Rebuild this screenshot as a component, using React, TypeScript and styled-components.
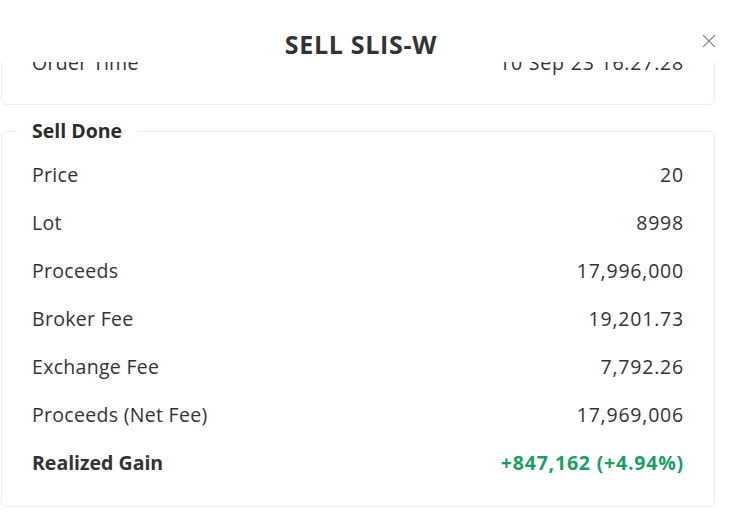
import React, { useLayoutEffect, useRef } from "react";
import styled, { createGlobalStyle } from "styled-components";

const GlobalStyle = createGlobalStyle`
  html, body {
    margin: 0;
    padding: 0;
    background: #ffffff;
  }
  body {
    font-family: "Open Sans", Lato, sans-serif;
    color: #333333;
  }
`;

const Modal = styled.div`
  width: 738px;
  height: 527px;
  display: flex;
  flex-direction: column;
  overflow: hidden;
  background: #ffffff;
`;

const Header = styled.header`
  position: relative;
  flex: 0 0 62px;
  width: 722px;
  display: flex;
  align-items: flex-end;
  justify-content: center;
  padding-bottom: 3px;
  box-sizing: border-box;
  background: #ffffff;
  z-index: 1;
`;

const Title = styled.h2`
  margin: 0;
  font-size: 25px;
  font-weight: 700;
  line-height: 30px;
  color: #333333;
  letter-spacing: 0.7px;
`;

const CloseButton = styled.button`
  position: absolute;
  top: 31px;
  right: 3px;
  width: 20px;
  height: 20px;
  padding: 0;
  border: none;
  background: transparent;
  color: #8a8a8a;
  cursor: pointer;
  display: flex;
  align-items: center;
  justify-content: center;
`;

const Body = styled.div`
  flex: 1;
  overflow-y: auto;
  padding: 0 23px 0 1px;
  scrollbar-width: none;
  &::-webkit-scrollbar {
    display: none;
  }
`;

const Card = styled.div`
  border: 1px solid #ececec;
  border-radius: 6px;
  padding: 19px 30px 18px;
`;

const Group = styled.fieldset`
  margin: 14px 0 22px;
  border: 1px solid #ececec;
  border-radius: 6px;
  padding: 7px 30px 20px;
  min-width: 0;
`;

const Legend = styled.legend`
  margin-left: -15px;
  padding: 0 15px;
  font-size: 19.5px;
  font-weight: 700;
  line-height: 24px;
  color: #2b2b2b;
`;

const Row = styled.div`
  display: flex;
  justify-content: space-between;
  align-items: center;
  height: 48px;
  font-size: 19.5px;
`;

const Label = styled.span<{ $strong?: boolean }>`
  font-weight: ${(p) => (p.$strong ? 700 : 400)};
  letter-spacing: ${(p) => (p.$strong ? 0 : 0.3)}px;
  color: #333333;
`;

const Value = styled.span<{ $tone?: "up" }>`
  font-weight: ${(p) => (p.$tone === "up" ? 700 : 400)};
  letter-spacing: 0.8px;
  color: ${(p) => (p.$tone === "up" ? "#18a064" : "#333333")};
`;

const doneRows = [
  ["Price", "20"],
  ["Lot", "8998"],
  ["Proceeds", "17,996,000"],
  ["Broker Fee", "19,201.73"],
  ["Exchange Fee", "7,792.26"],
  ["Proceeds (Net Fee)", "17,969,006"],
];

export default function App() {
  const bodyRef = useRef<HTMLDivElement>(null);

  useLayoutEffect(() => {
    // the order card is scrolled up under the header
    if (bodyRef.current) bodyRef.current.scrollTop = 44;
  }, []);

  return (
    <>
      <GlobalStyle />
      <Modal>
        <Header>
          <Title>SELL SLIS-W</Title>
          <CloseButton aria-label="Close">
            <svg width="14" height="14" viewBox="0 0 14 14" fill="none">
              <path d="M1 1L13 13M13 1L1 13" stroke="currentColor" strokeWidth="1.2" />
            </svg>
          </CloseButton>
        </Header>
        <Body ref={bodyRef}>
          <Card>
            <Row>
              <Label>Order Time</Label>
              <Value>10 Sep 23 16:27:28</Value>
            </Row>
          </Card>
          <Group>
            <Legend>Sell Done</Legend>
            {doneRows.map(([k, v]) => (
              <Row key={k}>
                <Label>{k}</Label>
                <Value>{v}</Value>
              </Row>
            ))}
            <Row>
              <Label $strong>Realized Gain</Label>
              <Value $tone="up">+847,162 (+4.94%)</Value>
            </Row>
          </Group>
        </Body>
      </Modal>
    </>
  );
}
